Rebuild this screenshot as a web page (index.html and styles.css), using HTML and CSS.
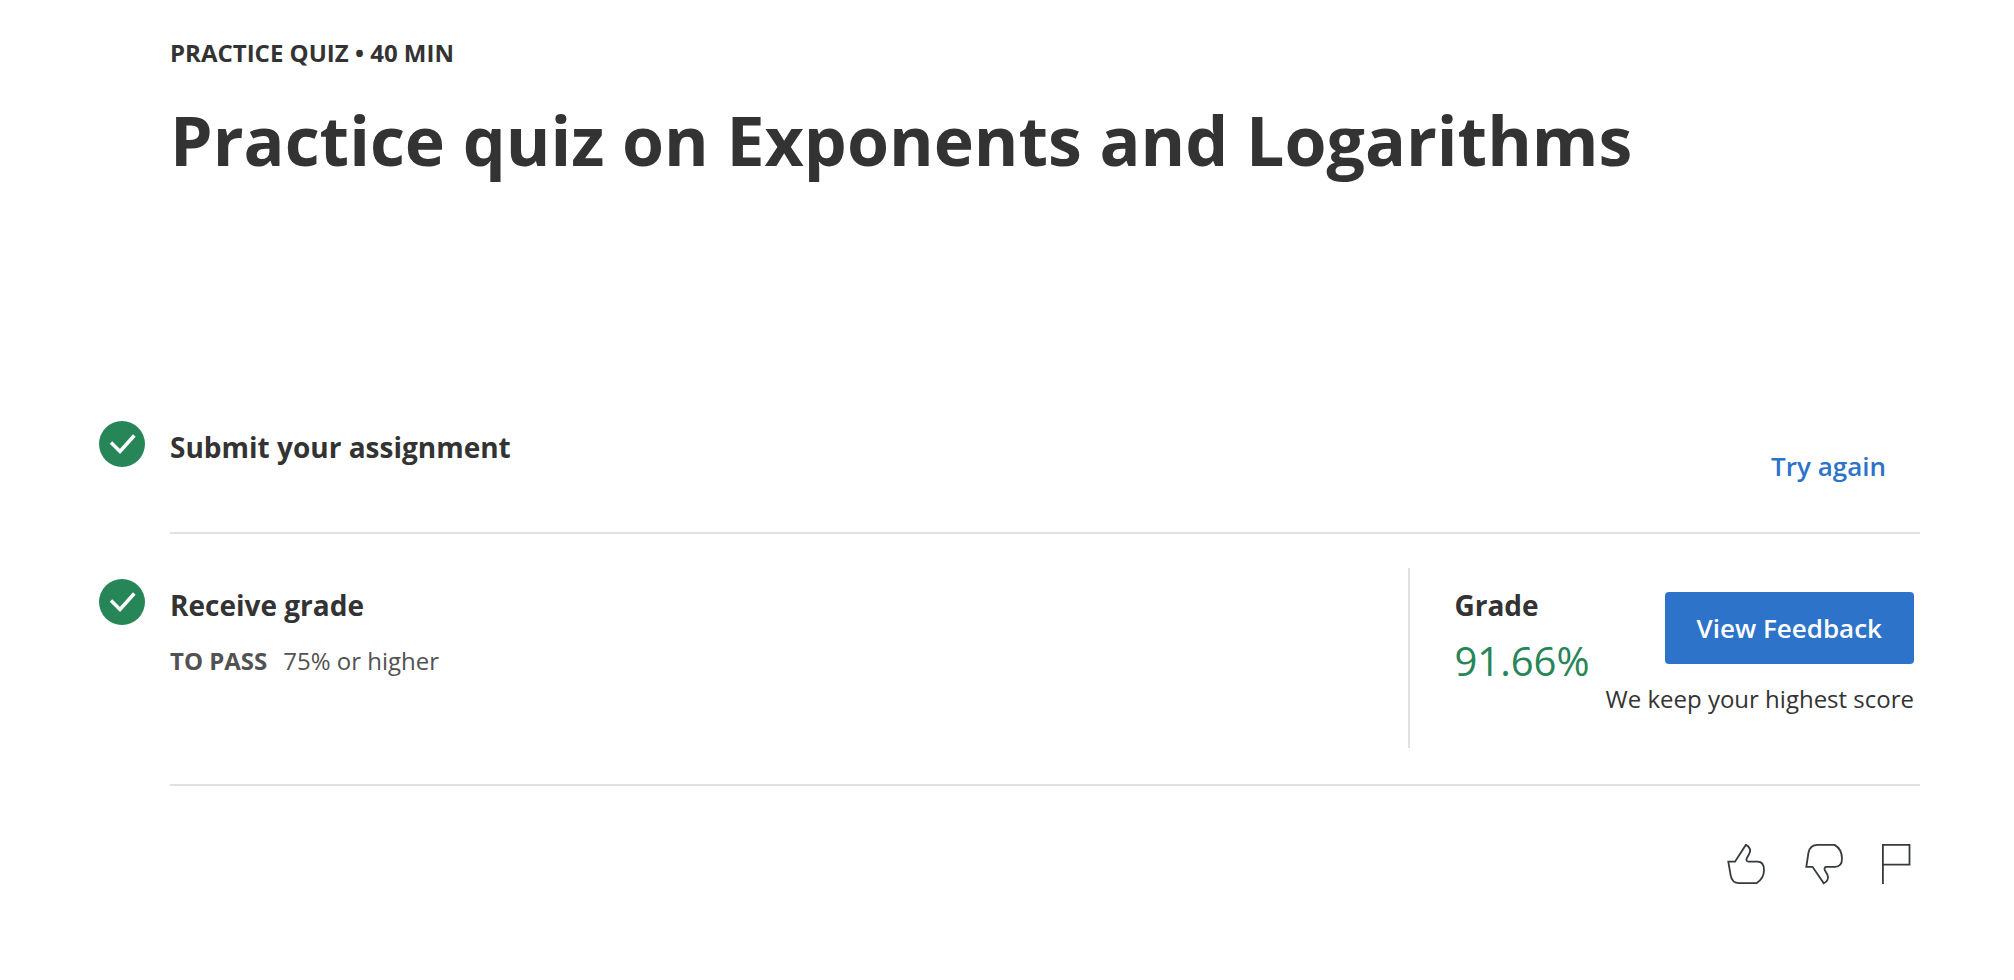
FILE: index.html
```html
<!DOCTYPE html>
<html lang="en">
<head>
<meta charset="utf-8">
<meta name="viewport" content="width=device-width, initial-scale=1">
<title>Practice quiz on Exponents and Logarithms</title>
<link rel="stylesheet" href="styles.css">
</head>
<body>
<main class="page">
  <header class="intro">
    <p class="eyebrow">PRACTICE QUIZ • 40 MIN</p>
    <h1 class="title">Practice quiz on Exponents and Logarithms</h1>
  </header>

  <section class="step">
    <svg class="check" viewBox="0 0 46 46" aria-hidden="true"><circle cx="23" cy="23" r="23"/><path d="M12 21.5 21 30.500 35.300 14.500"/></svg>
    <div class="step-body">
      <h2 class="heading">Submit your assignment</h2>
      <button class="link-button" type="button">Try again</button>
    </div>
  </section>

  <section class="step">
    <svg class="check" viewBox="0 0 46 46" aria-hidden="true"><circle cx="23" cy="23" r="23"/><path d="M12 21.5 21 30.500 35.300 14.500"/></svg>
    <div class="step-body">
      <div class="requirement">
        <h2 class="heading">Receive grade</h2>
        <p class="pass"><strong>TO PASS</strong><span>75% or higher</span></p>
      </div>
      <div class="result">
        <div class="grade">
          <h2 class="heading">Grade</h2>
          <p class="score">91.66%</p>
        </div>
        <div class="feedback">
          <button class="primary-button" type="button">View Feedback</button>
          <p class="note">We keep your highest score</p>
        </div>
      </div>
    </div>
  </section>

  <footer class="actions">
    <button class="icon-button" type="button" aria-label="Like">
      <svg viewBox="0 0 40 44"><path d="M2.300 17.700H9L19.800 .9C23.500 2.900 25 6.200 23.300 9.700L20.800 14.200C20 16.200 20.800 17.700 22.500 17.700H31.500C36 17.700 38 21.200 38 26.200C38 31.700 35 36.200 30.500 39.200H13C8.500 39.200 5.500 36.200 4.700 31.700Z"/></svg>
    </button>
    <button class="icon-button" type="button" aria-label="Dislike">
      <svg viewBox="0 0 40 44"><path d="M2.300 22.800H8.500L19.800 39.300C23.500 37.500 25 34 23.300 30.500L20.800 26.200C20 24.300 20.800 22.800 22.500 22.800H31C35.800 22.800 38 19.500 38 14.500C38 9 35 3.500 30.500 .9H13.500C8.500 .9 5.500 4.200 4.500 8.500Z"/></svg>
    </button>
    <button class="icon-button" type="button" aria-label="Report a problem">
      <svg class="narrow" viewBox="0 0 34 44"><path d="M.9 40V.9H27.500V20.700H.9"/></svg>
    </button>
  </footer>
</main>
</body>
</html>
```

FILE: styles.css
```css
* {
  box-sizing: border-box;
}

body {
  margin: 0;
  background: #fff;
  color: #333;
  font-family: "Open Sans", sans-serif;
  font-size: 24px;
  line-height: 32px;
}

h1,
h2,
p {
  margin: 0;
}

button {
  padding: 0;
  border: 0;
  background: none;
  font: inherit;
  cursor: pointer;
}

.page {
  padding: 37px 94px 48px 99px;
}

.intro {
  padding: 0 0 190px 71px;
}

.eyebrow {
  font-weight: 700;
}

.title {
  margin-top: 25px;
  font-size: 68px;
  font-weight: 700;
  line-height: 92px;
}

.step {
  display: grid;
  grid-template-columns: 46px 1fr;
  column-gap: 25px;
}

.check {
  width: 46px;
  height: 46px;
  margin-top: 45px;
}

.check circle {
  fill: #278657;
}

.check path {
  fill: none;
  stroke: #fff;
  stroke-width: 3.5;
}

.step-body {
  display: flex;
  justify-content: space-between;
  border-bottom: 2px solid #e1e1e1;
}

.step-body > .heading,
.requirement {
  padding-top: 53px;
}

.heading {
  font-size: 28px;
  font-weight: 700;
  line-height: 36px;
}

.link-button {
  margin: 72px 34px 48px 0;
  color: #2d73c9;
  font-size: 26px;
  font-weight: 600;
  line-height: 36px;
}

.pass {
  display: flex;
  gap: 16px;
  margin-top: 22px;
  color: #525252;
}

.result {
  display: flex;
  gap: 16px;
  min-height: 180px;
  margin: 34px 6px 36px 0;
  padding-left: 44px;
  border-left: 2px solid #e1e1e1;
}

.grade {
  padding-top: 19px;
}

.score {
  margin-top: 14px;
  color: #278657;
  font-size: 40px;
  line-height: 48px;
}

.feedback {
  display: flex;
  flex-direction: column;
  align-items: flex-end;
  gap: 19px;
  padding-top: 24px;
}

.primary-button {
  padding: 18px 32px;
  border-radius: 4px;
  background: #2d73c9;
  color: #fff;
  font-size: 26px;
  font-weight: 600;
  line-height: 36px;
}

.actions {
  display: flex;
  justify-content: flex-end;
  gap: 38px;
  padding: 58px 4px 0 0;
}

.icon-button svg {
  display: block;
  width: 40px;
  height: 44px;
  fill: none;
  stroke: #373a3c;
  stroke-width: 1.8;
}

.icon-button .narrow {
  width: 34px;
}
```
